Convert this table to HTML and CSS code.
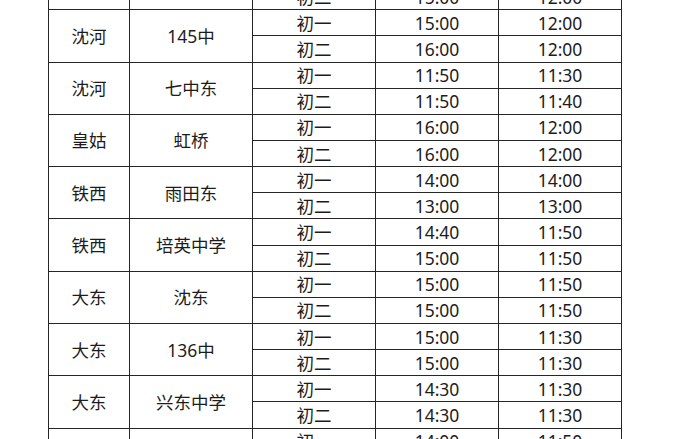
FILE: index.html
```html
<!DOCTYPE html>
<html lang="zh-CN">
<head>
<meta charset="utf-8">
<title>作息时间表</title>
<link rel="stylesheet" href="styles.css">
</head>
<body>
<div class="sheet">
<table class="schedule">
<colgroup>
<col class="c-district"><col class="c-school"><col class="c-grade"><col class="c-time"><col class="c-time">
</colgroup>
<tbody>
<tr><td rowspan="2"></td><td rowspan="2"></td><td>初一</td><td>15:00</td><td>12:00</td></tr>
<tr><td>初二</td><td>15:00</td><td>12:00</td></tr>

<tr><td rowspan="2">沈河</td><td rowspan="2">145中</td><td>初一</td><td>15:00</td><td>12:00</td></tr>
<tr><td>初二</td><td>16:00</td><td>12:00</td></tr>

<tr><td rowspan="2">沈河</td><td rowspan="2">七中东</td><td>初一</td><td>11:50</td><td>11:30</td></tr>
<tr><td>初二</td><td>11:50</td><td>11:40</td></tr>

<tr><td rowspan="2">皇姑</td><td rowspan="2">虹桥</td><td>初一</td><td>16:00</td><td>12:00</td></tr>
<tr><td>初二</td><td>16:00</td><td>12:00</td></tr>

<tr><td rowspan="2">铁西</td><td rowspan="2">雨田东</td><td>初一</td><td>14:00</td><td>14:00</td></tr>
<tr><td>初二</td><td>13:00</td><td>13:00</td></tr>

<tr><td rowspan="2">铁西</td><td rowspan="2">培英中学</td><td>初一</td><td>14:40</td><td>11:50</td></tr>
<tr><td>初二</td><td>15:00</td><td>11:50</td></tr>

<tr><td rowspan="2">大东</td><td rowspan="2">沈东</td><td>初一</td><td>15:00</td><td>11:50</td></tr>
<tr><td>初二</td><td>15:00</td><td>11:50</td></tr>

<tr><td rowspan="2">大东</td><td rowspan="2">136中</td><td>初一</td><td>15:00</td><td>11:30</td></tr>
<tr><td>初二</td><td>15:00</td><td>11:30</td></tr>

<tr><td rowspan="2">大东</td><td rowspan="2">兴东中学</td><td>初一</td><td>14:30</td><td>11:30</td></tr>
<tr><td>初二</td><td>14:30</td><td>11:30</td></tr>

<tr><td rowspan="2"></td><td rowspan="2"></td><td>初一</td><td>14:00</td><td>11:50</td></tr>
<tr><td>初二</td><td>14:00</td><td>11:50</td></tr>
</tbody>
</table>
</div>
</body>
</html>
```
FILE: styles.css
```css
html, body {
  margin: 0;
  padding: 0;
  background: #ffffff;
}

.sheet {
  width: 700px;
  height: 439px;
  overflow: hidden;
  padding-left: 48px;
  box-sizing: border-box;
}

.schedule {
  border-collapse: collapse;
  table-layout: fixed;
  width: 573px;
  margin-top: -43px;
  font-family: "Noto Sans", "Noto Sans CJK SC", sans-serif;
  font-size: 17.5px;
  color: #1c1c1c;
}

.c-district { width: 81px; }
.c-school { width: 123px; }
.c-grade { width: 123px; }
.c-time { width: 123px; }

.schedule tr {
  height: 26.15px;
}

.schedule td {
  border: 1px solid #262626;
  padding: 0;
  text-align: center;
  vertical-align: middle;
  line-height: 20px;
}
```
